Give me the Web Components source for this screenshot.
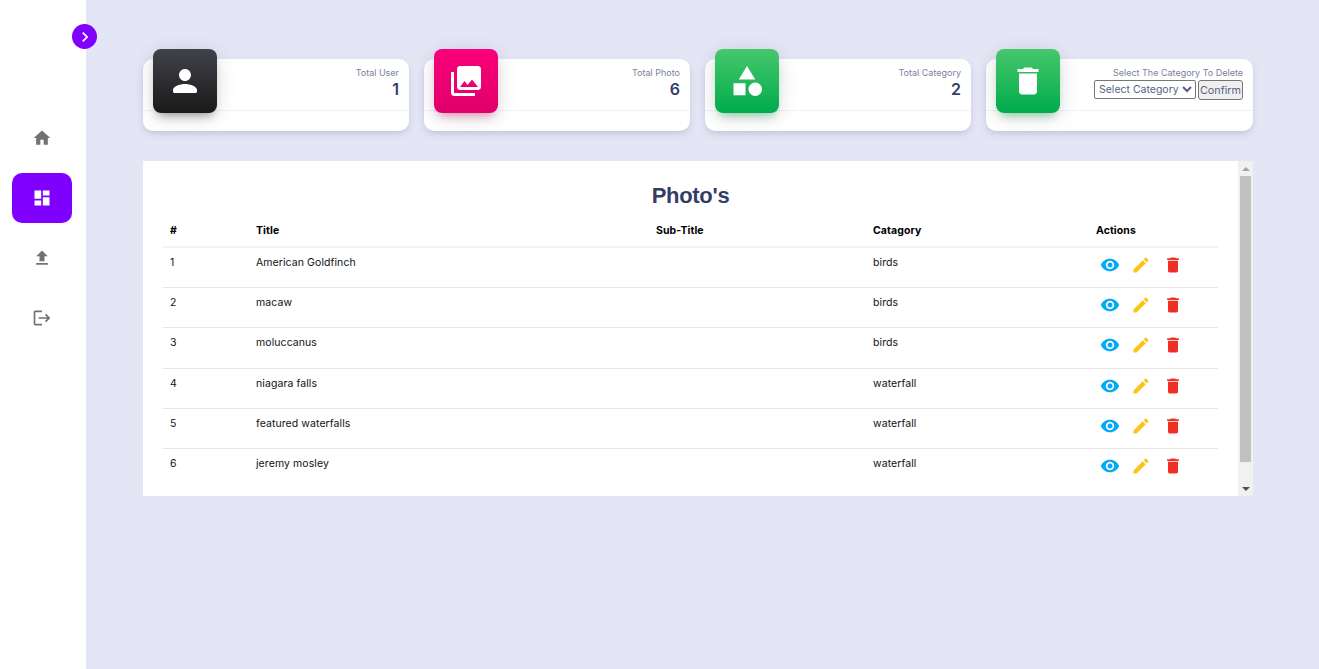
<!DOCTYPE html>
<html lang="en">
<head>
<meta charset="utf-8">
<title>Dashboard</title>
<style>
  html, body { margin: 0; height: 100%; }
  body { font-family: Inter, "Liberation Sans", sans-serif; background: #e4e6f6; overflow: hidden; }
</style>
</head>
<body>
<app-shell>
  <side-nav slot="side"></side-nav>
  <div class="cards" style="display:grid;grid-template-columns:repeat(3,266px) 1fr;gap:15px">
    <stat-card label="Total User" value="1" icon="person" from="#42424a" to="#191919" glow="rgba(25,25,25,.4)"></stat-card>
    <stat-card label="Total Photo" value="6" icon="photos" from="#fa0078" to="#e0006c" glow="rgba(224,0,108,.4)"></stat-card>
    <stat-card label="Total Category" value="2" icon="category" from="#47c76d" to="#00ab4b" glow="rgba(0,171,75,.4)"></stat-card>
    <stat-card label="Select The Category To Delete" icon="trash" from="#47c76d" to="#00ab4b" glow="rgba(0,171,75,.4)">
      <delete-form></delete-form>
    </stat-card>
  </div>
  <photo-table></photo-table>
</app-shell>

<script>
const ICONS = {
    home: 'M10 20v-6h4v6h5v-8h3L12 3 2 12h3v8z',
    dashboard: 'M3 13h8V3H3v10zm0 8h8v-6H3v6zm10 0h8V11h-8v10zm0-18v6h8V3h-8z',
    upload: 'M5 20h14v-2H5v2zm0-10h4v6h6v-6h4l-7-7-7 7z',
    logout: 'M17 7l-1.41 1.41L18.17 11H8v2h10.17l-2.58 2.58L17 17l5-5zM4 5h8V3H4c-1.1 0-2 .9-2 2v14c0 1.1.9 2 2 2h8v-2H4V5z',
    chevron: 'M10 6L8.59 7.41 13.17 12l-4.58 4.59L10 18l6-6z',
    person: 'M12 12c2.21 0 4-1.79 4-4s-1.79-4-4-4-4 1.79-4 4 1.79 4 4 4zm0 2c-2.67 0-8 1.34-8 4v1c0 .55.45 1 1 1h14c.55 0 1-.45 1-1v-1c0-2.66-5.33-4-8-4z',
    photos: 'M22 16V4c0-1.1-.9-2-2-2H8c-1.1 0-2 .9-2 2v12c0 1.1.9 2 2 2h12c1.1 0 2-.9 2-2zm-11-4l2.03 2.71L16 11l4 5H8l3-4zM2 6v14c0 1.1.9 2 2 2h14v-2H4V6H2z',
    category: 'M12 2l-5.5 9h11zM17.5 13a4.5 4.5 0 1 0 0 9 4.5 4.5 0 0 0 0-9zM3 13.5h8v8H3z',
    trash: 'M6 19c0 1.1.9 2 2 2h8c1.1 0 2-.9 2-2V7H6v12zM19 4h-3.5l-1-1h-5l-1 1H5v2h14V4z',
    edit: 'M3 17.25V21h3.75L17.81 9.94l-3.75-3.75L3 17.25zM20.71 7.04c.39-.39.39-1.02 0-1.41l-2.34-2.34c-.39-.39-1.02-.39-1.41 0l-1.83 1.83 3.75 3.75 1.83-1.83z',
    eye: 'M12 4.5C7 4.5 2.73 7.61 1 12c1.73 4.39 6 7.5 11 7.5s9.27-3.11 11-7.5c-1.73-4.39-6-7.5-11-7.5zM12 17c-2.76 0-5-2.24-5-5s2.24-5 5-5 5 2.24 5 5-2.24 5-5 5zm0-8c-1.66 0-3 1.34-3 3s1.34 3 3 3 3-1.34 3-3-1.34-3-3-3z'
};

const svg = (name, size, color) =>
    `<svg width="${size}" height="${size}" viewBox="0 0 24 24" fill="${color}" style="display:block"><path d="${ICONS[name]}"/></svg>`;

class AppShell extends HTMLElement {
    constructor() {
        super();
        this.attachShadow({ mode: 'open' });
        this.shadowRoot.innerHTML = `
            <style>
                :host { display: flex; height: 669px; }
                .main { flex: 1; min-width: 0; padding: 59px 66px 0 57px; display: flex; flex-direction: column; gap: 30px; }
            </style>
            <slot name="side"></slot>
            <div class="main"><slot></slot></div>
        `;
    }
}

class SideNav extends HTMLElement {
    constructor() {
        super();
        this.attachShadow({ mode: 'open' });
        const items = ['home', 'dashboard', 'upload', 'logout'];
        this.shadowRoot.innerHTML = `
            <style>
                :host { display: block; position: relative; width: 86px; flex: none; background: #fff; box-sizing: border-box; padding: 113px 14px 0 12px; }
                .toggle { position: absolute; top: 24px; left: 72px; width: 25px; height: 25px; border-radius: 50%; background: #8000ff; display: flex; align-items: center; justify-content: center; }
                .item { height: 50px; margin-bottom: 10px; border-radius: 10px; display: flex; align-items: center; justify-content: center; }
                .item.active { background: #8000ff; }
            </style>
            <div class="toggle">${svg('chevron', 20, '#fff')}</div>
            ${items.map(i => `<div class="item ${i === 'dashboard' ? 'active' : ''}">${svg(i, 20, i === 'dashboard' ? '#fff' : '#727272')}</div>`).join('')}
        `;
    }
}

class StatCard extends HTMLElement {
    constructor() {
        super();
        this.attachShadow({ mode: 'open' });
    }

    connectedCallback() {
        const a = n => this.getAttribute(n) || '';
        this.shadowRoot.innerHTML = `
            <style>
                :host { display: block; position: relative; height: 72px; background: #fff; border-radius: 10px; box-shadow: 0 4px 8px -1px rgba(40,40,90,.13), 0 2px 4px -1px rgba(40,40,90,.07); }
                .badge { position: absolute; top: -10px; left: 10px; width: 64px; height: 64px; border-radius: 8px; display: flex; align-items: center; justify-content: center; background: linear-gradient(180deg, ${a('from')}, ${a('to')}); box-shadow: 0 4px 20px rgba(0,0,0,.14), 0 7px 10px -5px ${a('glow')}; }
                .head { height: 52px; box-sizing: border-box; padding: 8px 10px 0 0; text-align: right; border-bottom: 1px solid #f0f2f5; }
                .label { font-size: 9px; line-height: 11px; color: #7b7f9e; }
                .value { font-size: 16px; line-height: 23px; font-weight: 600; color: #353c68; }
            </style>
            <div class="badge">${svg(a('icon'), 36, '#fff')}</div>
            <div class="head">
                <div class="label">${a('label')}</div>
                <div class="value">${a('value')}<slot></slot></div>
            </div>
        `;
    }
}

class DeleteForm extends HTMLElement {
    constructor() {
        super();
        this.attachShadow({ mode: 'open' });
        this.shadowRoot.innerHTML = `
            <style>
                :host { display: flex; justify-content: flex-end; gap: 2px; align-items: flex-start; margin-top: 2px; }
                select, button { font: 400 10.5px Inter, "Liberation Sans", sans-serif; color: #565f85; box-sizing: border-box; margin: 0; }
                select { width: 102px; height: 19px; background: #fff; border: 1px solid #767676; border-radius: 2px; padding: 0; }
                button { width: 45px; height: 20px; padding: 0; font-size: 10.8px; background: #efefef; border: 1px solid #767676; border-radius: 3px; }
            </style>
            <select><option>Select Category</option></select>
            <button>Confirm</button>
        `;
    }
}

class PhotoTable extends HTMLElement {
    constructor() {
        super();
        this.attachShadow({ mode: 'open' });
    }

    connectedCallback() {
        const photos = [
            ['American Goldfinch', 'birds'],
            ['macaw', 'birds'],
            ['moluccanus', 'birds'],
            ['niagara falls', 'waterfall'],
            ['featured waterfalls', 'waterfall'],
            ['jeremy mosley', 'waterfall']
        ];
        this.shadowRoot.innerHTML = `
            <style>
                :host { display: flex; height: 335px; background: #fff; }
                .content { flex: 1; min-width: 0; overflow: hidden; }
                .inner { padding: 21px 20px 28px 20px; }
                h2 { margin: 0 0 4.15px; height: 28px; font: 700 22px/28px "Liberation Sans", sans-serif; letter-spacing: -.3px; color: #353c68; text-align: center; }
                table { width: 100%; border-collapse: collapse; table-layout: fixed; font-size: 10.5px; letter-spacing: .08px; color: #111; }
                th { text-align: left; font-weight: 700; color: #000; height: 32px; padding: 0 7px; border-bottom: 2px solid #f0f2f5; }
                td { height: 40.3px; box-sizing: border-box; padding: 8px 7px 0; vertical-align: top; border-bottom: 1px solid #e6e6e9; line-height: 14px; }
                tr:last-child td { border-bottom: 0; }
                .actions { display: flex; margin: -3px 0 0 -2px; }
                .actions span { width: 31.5px; height: 20px; display: flex; justify-content: center; padding-top: 2px; }
                .bar { width: 15px; flex: none; background: #f1f1f1; display: flex; flex-direction: column; }
                .btn { height: 15px; display: flex; align-items: center; justify-content: center; }
                .up { width: 0; height: 0; border: 4px solid transparent; border-top: 0; border-bottom: 4px solid #a3a3a3; }
                .down { width: 0; height: 0; border: 4px solid transparent; border-bottom: 0; border-top: 4px solid #505050; }
                .thumb { height: 286px; width: 11px; margin-left: 2px; background: #c1c1c1; }
                .track { flex: 1; }
            </style>
            <div class="content">
                <div class="inner">
                    <h2>Photo's</h2>
                    <table>
                        <colgroup><col style="width:86px"><col style="width:400px"><col style="width:217px"><col style="width:223px"><col></colgroup>
                        <thead><tr><th>#</th><th>Title</th><th>Sub-Title</th><th>Catagory</th><th>Actions</th></tr></thead>
                        <tbody>
                            ${photos.map((p, i) => `
                                <tr>
                                    <td>${i + 1}</td><td>${p[0]}</td><td></td><td>${p[1]}</td>
                                    <td><div class="actions">
                                        <span>${svg('eye', 20, '#03a9f4')}</span>
                                        <span>${svg('edit', 20, '#fcc419')}</span>
                                        <span>${svg('trash', 20, '#ee3124')}</span>
                                    </div></td>
                                </tr>`).join('')}
                        </tbody>
                    </table>
                </div>
            </div>
            <div class="bar">
                <div class="btn"><div class="up"></div></div>
                <div class="thumb"></div>
                <div class="track"></div>
                <div class="btn"><div class="down"></div></div>
            </div>
        `;
    }
}

customElements.define('app-shell', AppShell);
customElements.define('side-nav', SideNav);
customElements.define('stat-card', StatCard);
customElements.define('delete-form', DeleteForm);
customElements.define('photo-table', PhotoTable);
</script>
</body>
</html>
